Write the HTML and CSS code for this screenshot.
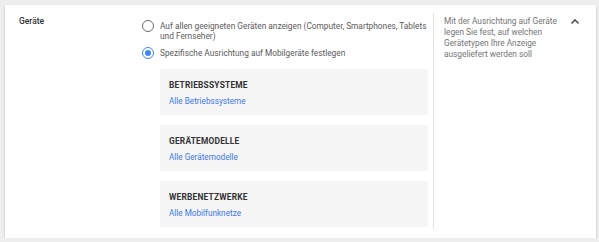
FILE: index.html
```html
<!DOCTYPE html>
<html lang="de">
<head>
<meta charset="utf-8">
<link rel="stylesheet" href="styles.css">
</head>
<body>
<div class="card">
  <div class="label">Geräte</div>
  <div class="main">
    <div class="radio-row">
      <span class="radio"></span>
      <span class="radio-text">Auf allen geeigneten Geräten anzeigen (Computer, Smartphones, Tablets und Fernseher)</span>
    </div>
    <div class="radio-row second">
      <span class="radio checked"></span>
      <span class="radio-text">Spezifische Ausrichtung auf Mobilgeräte festlegen</span>
    </div>
    <div class="boxes">
      <div class="box">
        <div class="box-title">BETRIEBSSYSTEME</div>
        <a class="box-link">Alle Betriebssysteme</a>
      </div>
      <div class="box">
        <div class="box-title">GERÄTEMODELLE</div>
        <a class="box-link">Alle Gerätemodelle</a>
      </div>
      <div class="box">
        <div class="box-title">WERBENETZWERKE</div>
        <a class="box-link">Alle Mobilfunknetze</a>
      </div>
    </div>
  </div>
  <div class="side">
    <p class="desc">Mit der Ausrichtung auf Geräte legen Sie fest, auf welchen Gerätetypen Ihre Anzeige ausgeliefert werden soll</p>
    <svg class="chevron" width="10" height="7" viewBox="0 0 10 7"><path d="M1.5 5.5 L5 2 L8.5 5.5" fill="none" stroke="#555" stroke-width="1.6"/></svg>
  </div>
</div>
</body>
</html>
```
FILE: styles.css
```css
html, body {
  margin: 0;
  padding: 0;
  background: #eeeeee;
  font-family: Roboto, "Noto Sans", sans-serif;
}
.card {
  box-sizing: border-box;
  margin: 5px 0 0 5px;
  width: 591px;
  height: 233px;
  background: #fff;
  box-shadow: 0 1px 2px rgba(0,0,0,0.25);
  display: flex;
  padding-top: 8px;
}
.label {
  width: 137px;
  padding-left: 14px;
  box-sizing: border-box;
  font-size: 8.5px;
  line-height: 12px;
  padding-top: 2px;
  color: #333;
  font-weight: 500;
}
.main {
  width: 286px;
  padding-top: 8px;
}
.radio-row {
  display: flex;
  align-items: flex-start;
  gap: 6px;
}
.radio-row.second {
  margin-top: 7px;
}
.radio {
  box-sizing: border-box;
  flex: none;
  width: 12px;
  height: 12px;
  border: 1.5px solid #6b6b6b;
  border-radius: 50%;
  margin-top: -1px;
  display: flex;
  align-items: center;
  justify-content: center;
}
.radio.checked {
  border-color: #4285f4;
}
.radio.checked::after {
  content: "";
  width: 6px;
  height: 6px;
  border-radius: 50%;
  background: #4285f4;
}
.radio-text {
  font-size: 8.3px;
  line-height: 10px;
  color: #5a5a5a;
}
.boxes {
  margin-left: 18px;
  margin-top: 10px;
  display: flex;
  flex-direction: column;
  gap: 10px;
}
.box {
  background: #f5f5f5;
  height: 46px;
  box-sizing: border-box;
  padding: 11px 9px 0;
  display: flex;
  flex-direction: column;
  gap: 6px;
}
.box-title {
  font-size: 8.4px;
  line-height: 10px;
  font-weight: 700;
  letter-spacing: 0.2px;
  color: #333;
}
.box-link {
  font-size: 8.2px;
  line-height: 10px;
  color: #3d77e6;
}
.side {
  margin-left: 5px;
  height: 216px;
  border-left: 1px solid #e3e3e3;
  padding-left: 10px;
  display: flex;
  width: 152px;
  box-sizing: border-box;
}
.desc {
  margin: 3px 0 0;
  width: 120px;
  font-size: 8.3px;
  line-height: 11px;
  color: #757575;
}
.chevron {
  margin-left: 6px;
  margin-top: 5px;
}
```
